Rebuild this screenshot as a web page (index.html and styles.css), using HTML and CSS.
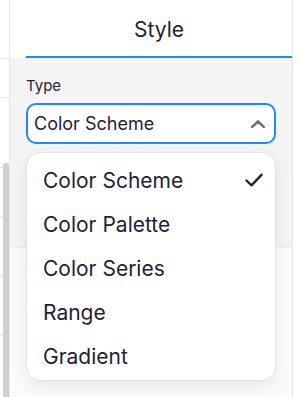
FILE: index.html
```html
<!DOCTYPE html>
<html lang="en">
<head>
    <meta charset="UTF-8">
    <meta name="viewport" content="width=device-width, initial-scale=1.0">
    <title>Style</title>
    <link rel="stylesheet" href="styles.css">
</head>
<body>
    <div class="app">
        <aside class="rail">
            <div class="rail-row r1"></div>
            <div class="rail-row r2"></div>
            <div class="rail-row r3"></div>
            <div class="rail-row r4"></div>
            <div class="rail-row r5"></div>
            <div class="rail-row r6"></div>
            <div class="scroll-thumb"></div>
        </aside>

        <main class="panel">
            <div class="tabs">
                <div class="tab active">Style</div>
            </div>

            <section class="section type-section">
                <label class="field-label">Type</label>
                <div class="select">
                    <span class="select-value">Color Scheme</span>
                    <svg class="chevron" width="14" height="8" viewBox="0 0 14 8">
                        <path d="M1.2 6.8 L7 1.3 L12.8 6.8" fill="none" stroke="#6b6d7e" stroke-width="2.5" stroke-linecap="round" stroke-linejoin="round"/>
                    </svg>
                </div>

                <ul class="menu">
                    <li class="menu-item selected">
                        <span>Color Scheme</span>
                        <svg class="check" width="18" height="14" viewBox="0 0 18 14">
                            <path d="M1.5 7.5 L6.5 12.3 L16.5 1.8" fill="none" stroke="#1f2237" stroke-width="2.4" stroke-linecap="round" stroke-linejoin="round"/>
                        </svg>
                    </li>
                    <li class="menu-item"><span>Color Palette</span></li>
                    <li class="menu-item"><span>Color Series</span></li>
                    <li class="menu-item"><span>Range</span></li>
                    <li class="menu-item"><span>Gradient</span></li>
                </ul>
            </section>

            <section class="section lower-section"></section>
        </main>

        <div class="edge"></div>
    </div>
</body>
</html>
```

FILE: styles.css
```css
body {
    margin: 0;
    width: 298px;
    height: 397px;
    overflow: hidden;
    background: #fff;
    font-family: Inter, "Noto Sans", sans-serif;
    color: #1f2237;
}

.app {
    display: flex;
    height: 397px;
    overflow: hidden;
}

/* left rail */
.rail {
    position: relative;
    width: 9px;
    border-right: 1px solid #e6e6e9;
    background: #fff;
    flex-shrink: 0;
    overflow: hidden;
}

.rail-row {
    border-bottom: 1px solid #e8e8eb;
}

.r1 { height: 58px; }
.r2 { height: 38px; }
.r3 { height: 69px; }
.r4 { height: 48px; }
.r5 { height: 58px; }
.r6 { height: 59px; }

.scroll-thumb {
    position: absolute;
    left: 3px;
    top: 163px;
    width: 6px;
    height: 234px;
    border-radius: 3px 3px 0 0;
    background: #cfd0d7;
}

/* main panel */
.panel {
    position: relative;
    flex: 1;
    display: flex;
    flex-direction: column;
}

.tabs {
    display: flex;
    height: 58px;
    background: #fff;
    padding-left: 16px;
}

.tab {
    flex: 1;
    display: flex;
    align-items: center;
    justify-content: center;
    font-size: 21px;
    color: #1f2237;
    padding-top: 2px;
}

.tab.active {
    border-bottom: 2px solid #1a8cff;
}

.section {
    padding: 0 16px;
}

.type-section {
    position: relative;
    height: 190px;
    box-sizing: border-box;
    padding-top: 18px;
    background: #f4f4f5;
    border-bottom: 1px solid #ececee;
}

.lower-section {
    flex: 1;
    background: #fbfbfb;
}

.field-label {
    display: block;
    font-size: 15px;
    line-height: 19px;
    color: #22253a;
}

.select {
    margin-top: 8px;
    height: 41px;
    box-sizing: border-box;
    border: 2px solid #1a8cff;
    border-radius: 10px;
    background: #fff;
    display: flex;
    align-items: center;
    justify-content: space-between;
    padding: 0 9px 0 6px;
}

.select-value {
    font-size: 18px;
    color: #1f2237;
}

.chevron {
    display: block;
}

/* dropdown */
.menu {
    position: absolute;
    top: 94px;
    left: 16px;
    width: 250px;
    box-sizing: border-box;
    margin: 0;
    padding: 5px 0 2px;
    list-style: none;
    background: #fff;
    border: 1px solid #e4e4e8;
    border-radius: 14px;
    box-shadow: 0 6px 16px rgba(0, 0, 0, 0.08);
    z-index: 5;
}

.menu-item {
    height: 44px;
    display: flex;
    align-items: center;
    justify-content: space-between;
    padding: 0 12px 0 16px;
    font-size: 21px;
    color: #1f2237;
}

.check {
    display: block;
}

/* right edge */
.edge {
    width: 5px;
    border-left: 1px solid #e6e6e9;
    background: #fff;
    flex-shrink: 0;
}
```
